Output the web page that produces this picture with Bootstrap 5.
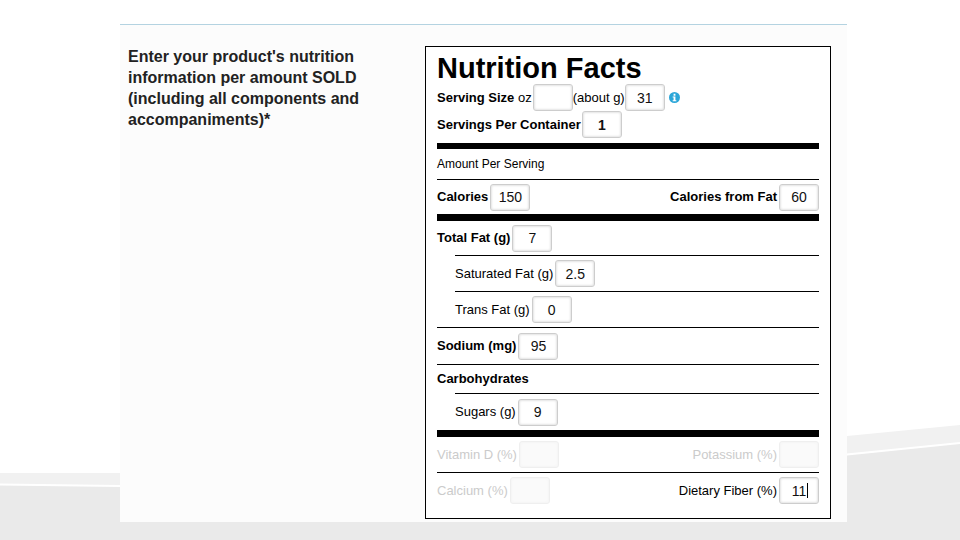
<!DOCTYPE html>
<html lang="en">
<head>
<meta charset="utf-8">
<meta name="viewport" content="width=device-width, initial-scale=1">
<title>Nutrition Facts</title>
<link href="https://cdn.jsdelivr.net/npm/bootstrap@5.3.0/dist/css/bootstrap.min.css" rel="stylesheet">
<style>
  body { font-family: "Liberation Sans", Arial, sans-serif; font-size: 13px; line-height: 18px; color: #000; background: #fff; }
  .backdrop { z-index: -1; height: 120px; }
  .slide { padding: 24px 113px 18px 120px; }
  .sheet { background: #fcfcfc; border-top: 1px solid #b4d3e1; padding: 21px 16px 3px 8px; }
  .prompt { font-size: 16px; line-height: 21px; color: #222; max-width: 240px; }
  .prompt-col { flex: 0 0 297px; }
  .facts { background: #fff; border: 1px solid #000; padding: 6px 11px 10px; }
  .facts h1 { font-size: 29px; line-height: 31px; }
  .line { min-height: 27px; gap: 1px; }
  .entry { min-height: 36px; border-top: 1px solid #000; gap: 2px; }
  .entry.short { min-height: 29px; }
  .entry.medium { min-height: 35px; }
  .entry.tall { min-height: 37px; }
  .after-bar { min-height: 34px; border-top: 0; }
  .sub { margin-left: 18px; }
  .bar { height: 7px; background: #000; }
  .bar.thin { height: 6px; margin-top: 5px; }
  .amount { font-size: 12px; min-height: 30px; }
  .entry .group { gap: 2px; }
  .num { width: 40px; height: 27px; padding: 0; font-size: 14px; line-height: 18px; text-align: center; color: #111; background: #fff; border: 1px solid #cdcdcd; border-radius: 3px; box-shadow: inset 0 0 2px 1px #e4e4e4; }
  .num:disabled { background: #fafafa; border-color: #efefef; box-shadow: inset 0 0 2px 1px #f5f5f5; }
  .off { color: #cbcbcb; }
  .caret { right: 11px; top: 6px; width: 1px; height: 15px; background: #000; }
  .info { margin-left: 3px; line-height: 0; }
</style>
<script src="https://cdn.jsdelivr.net/npm/bootstrap@5.3.0/dist/js/bootstrap.bundle.min.js"></script>
</head>
<body>
<div class="position-relative min-vh-100">
  <svg class="backdrop position-absolute bottom-0 start-0 w-100" viewBox="0 420 960 120" preserveAspectRatio="none" aria-hidden="true">
    <path d="M0 473H600L847 436L960 425V540H0Z" fill="#f1f1f1"/>
    <path d="M0 485L120 486H600L847 455L960 443V540H0Z" fill="#eaeaea"/>
    <path d="M0 484.500L120 486H600L847 454.500L960 443" fill="none" stroke="#fff" stroke-width="2"/>
  </svg>
  <main class="slide">
    <form class="sheet d-flex align-items-start">
      <div class="prompt-col"><p class="prompt fw-bold mb-0">Enter your product's nutrition information per amount SOLD (including all components and accompaniments)*</p></div>
      <section class="facts flex-grow-1">
        <h1 class="fw-bold mb-0">Nutrition Facts</h1>
        <div class="line d-flex align-items-center">
          <label for="oz"><b>Serving Size</b> oz</label>
          <div class="d-flex align-items-center"><input class="num" id="oz" type="text"><label for="grams">(about g)</label><input class="num" id="grams" type="text" value="31"></div>
          <a class="info" href="#" aria-label="Serving size help"><svg width="11" height="11" viewBox="0 0 12 12"><circle cx="6" cy="6" r="6" fill="#2ba6d8"/><path d="M5 2h2v2H5zM4 5h3v4h1v1H4V9h1V6H4z" fill="#fff"/></svg></a>
        </div>
        <div class="line d-flex align-items-center">
          <label class="fw-bold" for="count">Servings Per Container</label><input class="num fw-bold" id="count" type="text" value="1">
        </div>
        <div class="bar thin"></div>
        <div class="amount d-flex align-items-center">Amount Per Serving</div>
        <div class="entry medium d-flex align-items-center justify-content-between">
          <div class="group d-flex align-items-center"><label class="fw-bold" for="cal">Calories</label><input class="num" id="cal" type="text" value="150"></div>
          <div class="group d-flex align-items-center"><label class="fw-bold" for="calfat">Calories from Fat</label><input class="num" id="calfat" type="text" value="60"></div>
        </div>
        <div class="bar"></div>
        <div class="entry after-bar d-flex align-items-center"><label class="fw-bold" for="fat">Total Fat (g)</label><input class="num" id="fat" type="text" value="7"></div>
        <div class="entry sub d-flex align-items-center"><label for="sat">Saturated Fat (g)</label><input class="num" id="sat" type="text" value="2.5"></div>
        <div class="entry sub d-flex align-items-center"><label for="trans">Trans Fat (g)</label><input class="num" id="trans" type="text" value="0"></div>
        <div class="entry tall d-flex align-items-center"><label class="fw-bold" for="sodium">Sodium (mg)</label><input class="num" id="sodium" type="text" value="95"></div>
        <div class="entry short d-flex align-items-center fw-bold">Carbohydrates</div>
        <div class="entry tall sub d-flex align-items-center"><label for="sugar">Sugars (g)</label><input class="num" id="sugar" type="text" value="9"></div>
        <div class="bar"></div>
        <div class="entry medium border-top-0 d-flex align-items-center justify-content-between off">
          <div class="group d-flex align-items-center"><label for="vitd">Vitamin D (%)</label><input class="num" id="vitd" type="text" disabled></div>
          <div class="group d-flex align-items-center"><label for="potassium">Potassium (%)</label><input class="num" id="potassium" type="text" disabled></div>
        </div>
        <div class="entry d-flex align-items-center justify-content-between">
          <div class="group d-flex align-items-center off"><label for="calcium">Calcium (%)</label><input class="num" id="calcium" type="text" disabled></div>
          <div class="group d-flex align-items-center position-relative"><label for="fiber">Dietary Fiber (%)</label><input class="num" id="fiber" type="text" value="11"><span class="caret position-absolute"></span></div>
        </div>
      </section>
    </form>
  </main>
</div>
</body>
</html>
